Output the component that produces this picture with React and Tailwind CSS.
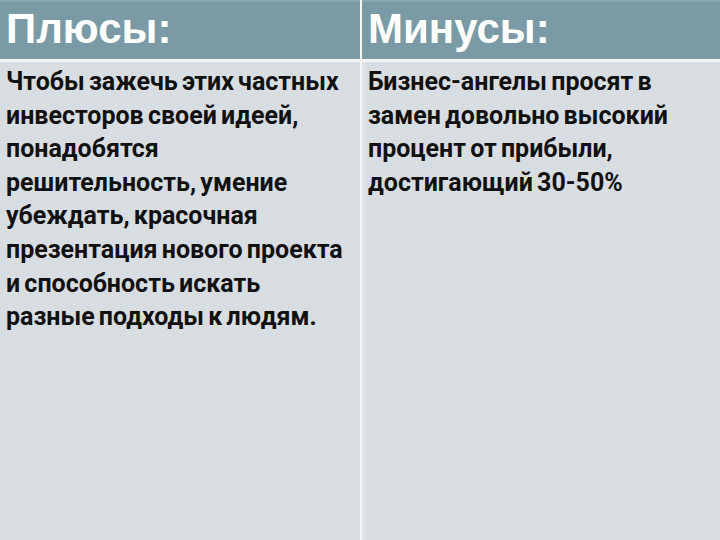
import React from 'react';

const headFont = { fontFamily: '"Liberation Sans", Arial, sans-serif' };
const bodyFont = { fontFamily: 'Roboto, "Open Sans", sans-serif', wordSpacing: '-2px' };

function Column({ title, lines, inset }) {
  return (
    <div className="flex flex-col">
      <div className="h-[59px] bg-[#7a9ba5] border-t-2 border-[#8aa6ae]">
        <div className="text-white font-bold text-[42px] leading-none pl-[6px] pt-[6px]" style={headFont}>
          {title}
        </div>
      </div>
      <div className="h-[3px] bg-[#f2f4f6]"></div>
      <div className={inset ? 'flex-1 border-l-[4px] border-[#dfe3e6] pl-[2px]' : 'flex-1 pl-[6px]'}>
        <div className="text-[#111] font-bold text-[25px] leading-[33.6px] pt-[3px]" style={bodyFont}>
          {lines.map((l) => (
            <div key={l} className="whitespace-nowrap">{l}</div>
          ))}
        </div>
      </div>
    </div>
  );
}

export default function App() {
  return (
    <div className="w-[720px] h-[540px] bg-[#d8dde1] grid grid-cols-[360px_2px_358px] overflow-hidden">
      <Column
        title="Плюсы:"
        lines={[
          'Чтобы зажечь этих частных',
          'инвесторов своей идеей,',
          'понадобятся',
          'решительность, умение',
          'убеждать, красочная',
          'презентация нового проекта',
          'и способность искать',
          'разные подходы к людям.',
        ]}
      />
      <div className="bg-[#f4f6f8]"></div>
      <Column
        inset
        title="Минусы:"
        lines={[
          'Бизнес-ангелы просят в',
          'замен довольно высокий',
          'процент от прибыли,',
          'достигающий 30-50%',
        ]}
      />
    </div>
  );
}
